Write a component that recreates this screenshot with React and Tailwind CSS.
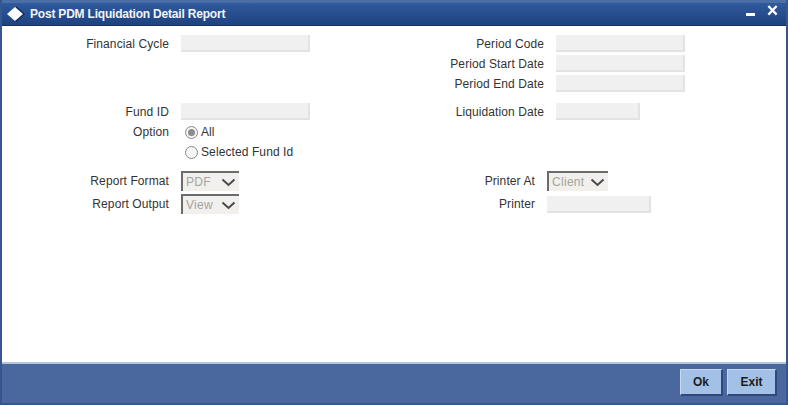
const font = { fontFamily: '"Liberation Sans", Arial, sans-serif' };

const Input = ({ width = "w-[129px]" }) => (
  <div className={`${width} h-[17px] bg-[#f0f0f0] border-r-2 border-b-2 border-[#e3e3e3]`} />
);

const Label = ({ children }) => (
  <span className="w-[150px] text-right text-[12px] leading-none tracking-[0.1px] text-[#333333]">{children}</span>
);

const Field = ({ label, children }) => (
  <div className="flex items-center gap-3 h-[17px]">
    <Label>{label}</Label>
    {children}
  </div>
);

const Select = ({ value, width = "w-[58px]" }) => (
  <div className={`${width} h-[20px] flex items-center justify-between bg-[#f1f0ec] border-l-2 border-t-2 border-[#6b6b6b] pl-[3px] pr-[3px]`}>
    <span className="text-[12px] leading-none tracking-[0.3px] text-[#a3a3a3]">{value}</span>
    <svg width="15" height="9" viewBox="0 0 15 9">
      <path d="M1.5 1.5 L7.5 7 L13.5 1.5" fill="none" stroke="#4a4a4a" strokeWidth="2" />
    </svg>
  </div>
);

const Radio = ({ checked, label }) => (
  <div className="flex items-center gap-[3px] h-[20px]">
    <span className="w-[13px] h-[13px] rounded-full border border-[#8a8a8a] bg-[#f6f6f6] flex items-center justify-center">
      {checked && <span className="w-[7px] h-[7px] rounded-full bg-[#8c8c8c]" />}
    </span>
    <span className="text-[12px] leading-none tracking-[0.1px] text-[#333333]">{label}</span>
  </div>
);

const Button = ({ children, width }) => (
  <button
    type="button"
    className={`${width} h-[27px] bg-[#a3c1e6] border-t border-l border-[#c4d8f0] border-r-2 border-b-2 border-r-[#2f4a7a] border-b-[#2f4a7a] text-[12px] font-bold text-[#1c1c1c]`}
  >
    {children}
  </button>
);

export default function App() {
  return (
    <div style={font} className="w-[788px] h-[405px] flex flex-col bg-[#4a689e] border-l-2 border-r-2 border-b-2 border-[#35568f] overflow-hidden">
      <header className="h-[26px] shrink-0 flex items-center justify-between border-t-[3px] border-[#4a6ea6] border-b border-b-[#17305f] bg-gradient-to-b from-[#2f5a9e] to-[#1f4280] pl-[5px] pr-[8px]">
        <div className="flex items-center gap-[5px]">
          <svg width="18" height="16" viewBox="0 0 18 16">
            <path d="M9 0 L18 8 L9 16 L7 14 L14 8 L9 3 Z" fill="#0f2a5a" />
            <path d="M8 1 L16 8 L8 15 L0 8 Z" fill="#ffffff" />
          </svg>
          <h1 className="text-[12px] font-bold tracking-[-0.2px] text-[#f2f5fa]">Post PDM Liquidation Detail Report</h1>
        </div>
        <div className="flex items-start gap-3 self-start pt-[2px]">
          <span className="w-[9px] h-[3px] bg-white mt-[8px]" />
          <svg width="11" height="11" viewBox="0 0 12 12">
            <path d="M1.5 1 L10.5 10.5 M10.5 1 L1.5 10.5" stroke="#ffffff" strokeWidth="2.4" fill="none" />
          </svg>
        </div>
      </header>

      <main className="h-[338px] shrink-0 bg-white border-b-2 border-[#b6c6e0] pl-[17px] pt-[9px]">
        <section className="flex">
          <div className="w-[375px]">
            <Field label="Financial Cycle"><Input /></Field>
          </div>
          <div className="flex flex-col gap-[3px]">
            <Field label="Period Code"><Input /></Field>
            <Field label="Period Start Date"><Input /></Field>
            <Field label="Period End Date"><Input /></Field>
          </div>
        </section>

        <section className="flex mt-[11px]">
          <div className="w-[375px]">
            <Field label="Fund ID"><Input /></Field>
          </div>
          <Field label="Liquidation Date"><Input width="w-[84px]" /></Field>
        </section>

        <section className="flex gap-3 mt-[2px]">
          <div className="h-[20px] flex items-center"><Label>Option</Label></div>
          <div className="flex flex-col pl-[4px]">
            <Radio checked label="All" />
            <Radio label="Selected Fund Id" />
          </div>
        </section>

        <section className="flex mt-[9px]">
          <div className="w-[366px] flex flex-col gap-[3px]">
            <div className="flex items-center gap-3 h-[20px]">
              <Label>Report Format</Label>
              <Select value="PDF" />
            </div>
            <div className="flex items-center gap-3 h-[20px]">
              <Label>Report Output</Label>
              <Select value="View" />
            </div>
          </div>
          <div className="flex flex-col gap-[3px]">
            <div className="flex items-center gap-3 h-[20px]">
              <Label>Printer At</Label>
              <Select value="Client" width="w-[61px]" />
            </div>
            <div className="h-[20px] flex items-center">
              <Field label="Printer"><Input width="w-[104px]" /></Field>
            </div>
          </div>
        </section>
      </main>

      <footer className="flex-1 flex items-center justify-end gap-1 pr-[9px] pb-[3px]">
        <Button width="w-[43px]">Ok</Button>
        <Button width="w-[50px]">Exit</Button>
      </footer>
    </div>
  );
}
